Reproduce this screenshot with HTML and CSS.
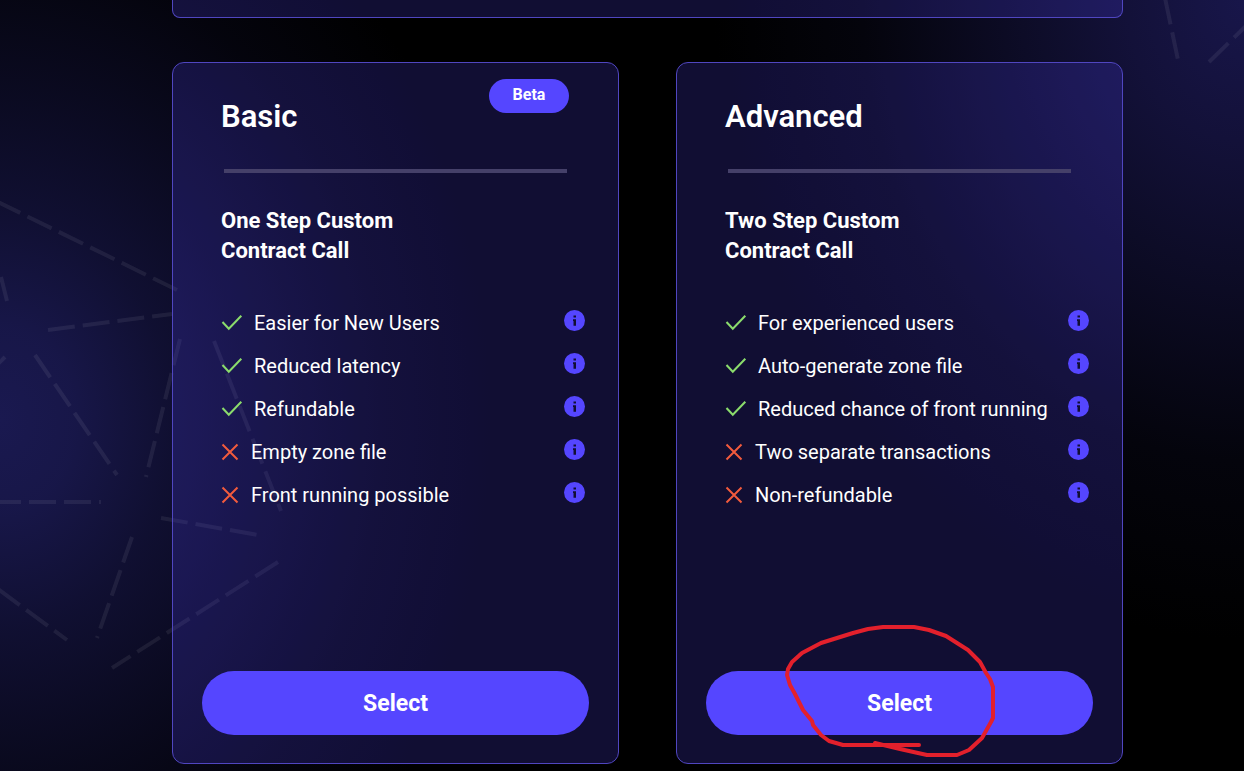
FILE: index.html
```html
<!DOCTYPE html>
<html lang="en">
<head>
<meta charset="utf-8">
<meta name="viewport" content="width=device-width, initial-scale=1">
<title>Select a registration method</title>
<link rel="stylesheet" href="styles.css">
</head>
<body>
<svg class="constellation" width="1244" height="771" viewBox="0 0 1244 771" aria-hidden="true">
  <g fill="none" stroke="#ffffff" stroke-opacity=".07" stroke-width="4" stroke-dasharray="27 8">
    <path d="M-4 201L177 290"/>
    <path d="M48 330L172 314"/>
    <path d="M1 277L7 301"/>
    <path d="M5 357L-4 366"/>
    <path d="M35 355L117 475"/>
    <path d="M180 339L146 477"/>
    <path d="M214 341L281 511"/>
    <path d="M-6 502H101"/>
    <path d="M161 518L264 536"/>
    <path d="M132 537L97 638"/>
    <path d="M-2 589L67 640"/>
    <path d="M278 562L112 668"/>
    <path d="M1165 -2L1178 60"/>
    <path d="M1209 62L1250 22"/>
  </g>
</svg>
<svg class="symbols" aria-hidden="true">
  <symbol id="check" viewBox="0 0 22 18"><path d="M1.500 8L7.800 14.800L20.300 1.800" fill="none" stroke="#8bdc6c" stroke-width="2"/></symbol>
  <symbol id="cross" viewBox="0 0 18 18"><path d="M1.500 1.500L16.500 16.500M16.500 1.500L1.500 16.500" fill="none" stroke="#f25b3d" stroke-width="2"/></symbol>
  <symbol id="info" viewBox="0 0 22 22"><circle cx="10.500" cy="10.500" r="10.500" fill="#5546ff"/><path d="M9.500 5.500H12V7.500H9.500ZM9 9.300H12V15.800H9.500V11H9Z" fill="#110e34"/></symbol>
</svg>
<main class="page">
  <div class="panel"></div>
  <div class="plans">
    <section class="card">
      <span class="badge">Beta</span>
      <div class="content">
        <h2 class="title">Basic</h2>
        <hr class="rule">
        <h3 class="subtitle">One Step Custom<br>Contract Call</h3>
        <ul class="features">
          <li class="feature"><svg class="check"><use href="#check"/></svg><span>Easier for New Users</span><button class="info" aria-label="About Easier for New Users"><svg><use href="#info"/></svg></button></li>
          <li class="feature"><svg class="check"><use href="#check"/></svg><span>Reduced latency</span><button class="info" aria-label="About Reduced latency"><svg><use href="#info"/></svg></button></li>
          <li class="feature"><svg class="check"><use href="#check"/></svg><span>Refundable</span><button class="info" aria-label="About Refundable"><svg><use href="#info"/></svg></button></li>
          <li class="feature"><svg class="cross"><use href="#cross"/></svg><span>Empty zone file</span><button class="info" aria-label="About Empty zone file"><svg><use href="#info"/></svg></button></li>
          <li class="feature"><svg class="cross"><use href="#cross"/></svg><span>Front running possible</span><button class="info" aria-label="About Front running possible"><svg><use href="#info"/></svg></button></li>
        </ul>
      </div>
      <button class="select">Select</button>
    </section>
    <section class="card">
      <div class="content">
        <h2 class="title">Advanced</h2>
        <hr class="rule">
        <h3 class="subtitle">Two Step Custom<br>Contract Call</h3>
        <ul class="features">
          <li class="feature"><svg class="check"><use href="#check"/></svg><span>For experienced users</span><button class="info" aria-label="About For experienced users"><svg><use href="#info"/></svg></button></li>
          <li class="feature"><svg class="check"><use href="#check"/></svg><span>Auto-generate zone file</span><button class="info" aria-label="About Auto-generate zone file"><svg><use href="#info"/></svg></button></li>
          <li class="feature"><svg class="check"><use href="#check"/></svg><span>Reduced chance of front running</span><button class="info" aria-label="About Reduced chance of front running"><svg><use href="#info"/></svg></button></li>
          <li class="feature"><svg class="cross"><use href="#cross"/></svg><span>Two separate transactions</span><button class="info" aria-label="About Two separate transactions"><svg><use href="#info"/></svg></button></li>
          <li class="feature"><svg class="cross"><use href="#cross"/></svg><span>Non-refundable</span><button class="info" aria-label="About Non-refundable"><svg><use href="#info"/></svg></button></li>
        </ul>
      </div>
      <button class="select">Select</button>
      <svg class="scribble" viewBox="780 620 220 140" aria-hidden="true"><path d="M919 745H843L829 741L821 735L813 725L812 721L803 710L795 694L790 685L787 675L788 669L792 662L802 653L821 643L853 633L868 629L883 627H914L929 630L946 636L968 650L980 662L986 673L990 679L993 687V718L991 722L982 738L969 750L957 755H927L900 749L875 743" fill="none" stroke="#e3202c" stroke-width="4" stroke-linecap="round" stroke-linejoin="round"/><path d="M880 744L896 747L906 746Z" fill="#e3202c" stroke="#e3202c" stroke-width="2"/></svg>
    </section>
  </div>
</main>
</body>
</html>
```
FILE: styles.css
```css
* { box-sizing: border-box; }

body {
  margin: 0;
  min-height: 100vh;
  color: #fff;
  font-family: Roboto, "Liberation Sans", sans-serif;
  background:
    radial-gradient(ellipse 500px 620px at 0 420px, rgba(26, 25, 80, 1) 0%, rgba(26, 25, 80, .9) 15%, rgba(26, 25, 80, .62) 34%, rgba(26, 25, 80, .42) 52%, rgba(26, 25, 80, .16) 76%, rgba(26, 25, 80, 0) 100%),
    radial-gradient(ellipse 530px 640px at 100% 0, #18164a 0%, #131139 22%, #0d0c27 42%, #04040c 72%, #000 100%),
    #000;
}

.constellation {
  position: absolute;
  top: 0;
  left: 0;
  width: 100%;
  pointer-events: none;
}

.symbols { position: absolute; width: 0; height: 0; }

.page {
  position: relative;
  padding: 0 121px 0 172px;
}

.panel {
  height: 18px;
  margin-bottom: 44px;
  border: 1px solid #5046c0;
  border-top: 0;
  border-radius: 0 0 8px 8px;
  background: rgba(85, 70, 255, .2);
}

.plans {
  display: grid;
  grid-template-columns: 1fr 1fr;
  gap: 57px;
  padding-bottom: 7px;
}

.card {
  position: relative;
  display: flex;
  flex-direction: column;
  padding: 36px 29px 28px;
  border: 1px solid #5046c0;
  border-radius: 12px;
  background: rgba(85, 70, 255, .2);
}

.badge {
  position: absolute;
  top: 16px;
  right: 49px;
  width: 80px;
  height: 34px;
  border-radius: 17px;
  background: #5546ff;
  font-size: 16px;
  font-weight: 700;
  line-height: 32px;
  text-align: center;
}

.content { padding: 0 3px 0 19px; }

.title {
  margin: 0;
  font-size: 31px;
  font-weight: 600;
  line-height: 36px;
}

.rule {
  height: 4px;
  margin: 34px 19px 33px 3px;
  border: 0;
  background: #454069;
}

.subtitle {
  margin: 0;
  font-size: 22px;
  font-weight: 700;
  line-height: 30px;
}

.features {
  margin: 35px 0 155px;
  padding: 0;
  list-style: none;
}

.feature {
  display: flex;
  align-items: center;
  height: 43px;
  font-size: 20px;
  line-height: 24px;
  white-space: nowrap;
}

.check {
  width: 22px;
  height: 18px;
  margin-right: 11px;
}

.cross {
  width: 18px;
  height: 18px;
  margin-right: 12px;
}

.info {
  display: flex;
  margin: 0 0 4px auto;
  padding: 0;
  border: 0;
  background: none;
  cursor: pointer;
}

.info svg { width: 22px; height: 22px; }

.select {
  height: 64px;
  border: 0;
  border-radius: 32px;
  background: #5546ff;
  color: #fff;
  font-family: inherit;
  font-size: 23px;
  font-weight: 700;
  cursor: pointer;
}

.scribble {
  position: absolute;
  right: 122px;
  bottom: 3px;
  width: 220px;
  height: 140px;
  pointer-events: none;
}
```
